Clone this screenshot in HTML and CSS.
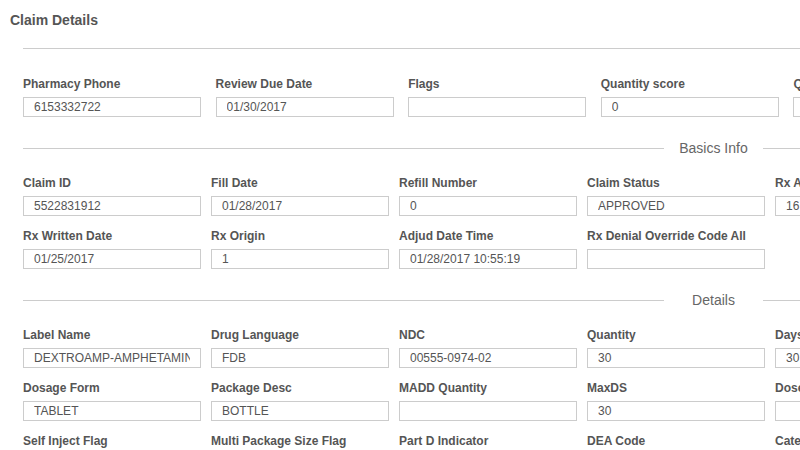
FILE: index.html
```html
<!DOCTYPE html>
<html lang="en">
<head>
  <meta charset="UTF-8">
  <meta name="viewport" content="width=device-width, initial-scale=1.0">
  <title>Claim Details</title>
  <link rel="stylesheet" href="styles.css">
</head>
<body>
  <div class="page">
    <h2 class="page-title">Claim Details</h2>

    <div class="content">
      <div class="rule"></div>

      <div class="field-grid wide">
        <div class="field"><label>Pharmacy Phone</label><input type="text" value="6153332722" readonly></div>
        <div class="field"><label>Review Due Date</label><input type="text" value="01/30/2017" readonly></div>
        <div class="field"><label>Flags</label><input type="text" value="" readonly></div>
        <div class="field"><label>Quantity score</label><input type="text" value="0" readonly></div>
        <div class="field"><label>Quantity Limit</label><input type="text" value="" readonly></div>
      </div>

      <div class="divider">
        <span class="divider-line"></span>
        <span class="divider-title">Basics Info</span>
        <span class="divider-line end"></span>
      </div>

      <div class="field-grid">
        <div class="field"><label>Claim ID</label><input type="text" value="5522831912" readonly></div>
        <div class="field"><label>Fill Date</label><input type="text" value="01/28/2017" readonly></div>
        <div class="field"><label>Refill Number</label><input type="text" value="0" readonly></div>
        <div class="field"><label>Claim Status</label><input type="text" value="APPROVED" readonly></div>
        <div class="field"><label>Rx Amount</label><input type="text" value="16" readonly></div>
        <div class="field"><label>Rx Written Date</label><input type="text" value="01/25/2017" readonly></div>
        <div class="field"><label>Rx Origin</label><input type="text" value="1" readonly></div>
        <div class="field"><label>Adjud Date Time</label><input type="text" value="01/28/2017 10:55:19" readonly></div>
        <div class="field"><label>Rx Denial Override Code All</label><input type="text" value="" readonly></div>
      </div>

      <div class="divider">
        <span class="divider-line"></span>
        <span class="divider-title">Details</span>
        <span class="divider-line end"></span>
      </div>

      <div class="field-grid">
        <div class="field"><label>Label Name</label><input type="text" value="DEXTROAMP-AMPHETAMINE ER 20 MG" readonly></div>
        <div class="field"><label>Drug Language</label><input type="text" value="FDB" readonly></div>
        <div class="field"><label>NDC</label><input type="text" value="00555-0974-02" readonly></div>
        <div class="field"><label>Quantity</label><input type="text" value="30" readonly></div>
        <div class="field"><label>Days Supply</label><input type="text" value="30" readonly></div>
        <div class="field"><label>Dosage Form</label><input type="text" value="TABLET" readonly></div>
        <div class="field"><label>Package Desc</label><input type="text" value="BOTTLE" readonly></div>
        <div class="field"><label>MADD Quantity</label><input type="text" value="" readonly></div>
        <div class="field"><label>MaxDS</label><input type="text" value="30" readonly></div>
        <div class="field"><label>Dose Per Day</label><input type="text" value="" readonly></div>
        <div class="field"><label>Self Inject Flag</label><input type="text" value="" readonly></div>
        <div class="field"><label>Multi Package Size Flag</label><input type="text" value="" readonly></div>
        <div class="field"><label>Part D Indicator</label><input type="text" value="" readonly></div>
        <div class="field"><label>DEA Code</label><input type="text" value="" readonly></div>
        <div class="field"><label>Category</label><input type="text" value="" readonly></div>
      </div>
    </div>
  </div>
</body>
</html>
```

FILE: styles.css
```css
body {
  margin: 0;
  font-family: "Liberation Sans", Arial, sans-serif;
  color: #555;
  background: #fff;
  overflow: hidden;
}
.page {
  padding: 12px 0 0 10px;
}
.page-title {
  margin: 0;
  font-size: 14px;
  line-height: 16px;
  font-weight: bold;
  color: #555;
}
.content {
  margin-left: 13px;
  width: 840px;
}
.rule {
  margin-top: 20px;
  border-top: 1px solid #ccc;
  width: 900px;
}
.field-grid {
  display: grid;
  grid-template-columns: repeat(5, 178px);
  column-gap: 10px;
  row-gap: 13px;
}
.field-grid.wide {
  margin-top: 28px;
  column-gap: 14.6px;
}
.field label {
  display: block;
  font-size: 12px;
  line-height: 14px;
  font-weight: bold;
  white-space: nowrap;
  margin-bottom: 6px;
}
.field input {
  display: block;
  box-sizing: border-box;
  width: 178px;
  height: 20px;
  margin: 0;
  padding: 0 10px;
  border: 1px solid #ccc;
  border-radius: 0;
  background: #fff;
  font-family: "Liberation Sans", Arial, sans-serif;
  font-size: 12px;
  color: #555;
  outline: none;
}
.divider {
  display: flex;
  align-items: center;
  height: 16px;
  margin: 23px 0 20px;
}
.divider-line {
  flex: 1;
  border-top: 1px solid #ccc;
}
.divider-line.end {
  flex: 0 0 100px;
}
.divider-title {
  width: 99px;
  text-align: center;
  font-size: 14px;
  line-height: 16px;
  color: #666;
}
```
